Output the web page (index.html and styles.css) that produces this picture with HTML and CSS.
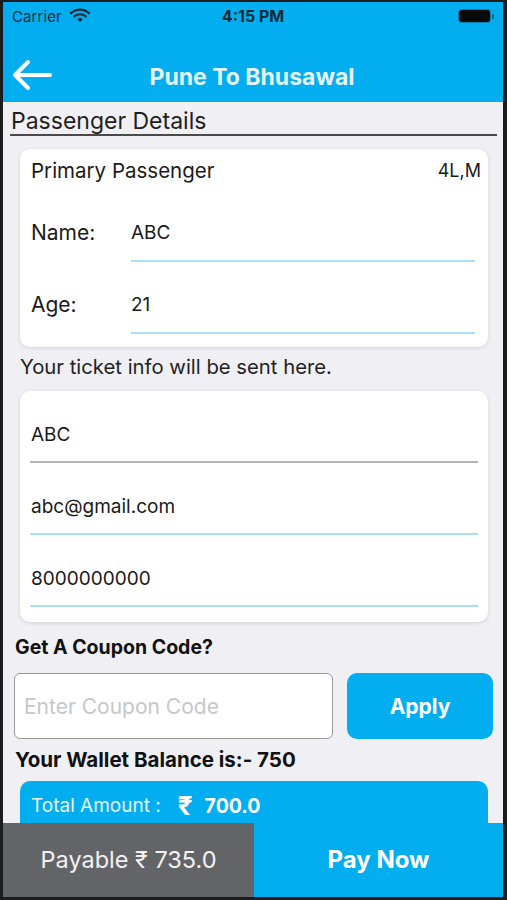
FILE: index.html
```html
<!DOCTYPE html>
<html>
<head>
<meta charset="utf-8">
<link rel="stylesheet" href="styles.css">
</head>
<body>
<div class="app">
  <header class="top">
    <div class="status">
      <div class="status-left">
        <span class="carrier">Carrier</span>
        <svg class="wifi" width="20" height="15" viewBox="0 0 20 15">
          <path d="M1 5.2 A13 13 0 0 1 19 5.2" fill="none" stroke="#0c2a36" stroke-width="2.4" stroke-linecap="round"/>
          <path d="M4.3 8.4 A8.3 8.3 0 0 1 15.7 8.4" fill="none" stroke="#0c2a36" stroke-width="2.4" stroke-linecap="round"/>
          <path d="M10 14 L7.2 11.3 A4 4 0 0 1 12.8 11.3 Z" fill="#0c2a36"/>
        </svg>
      </div>
      <span class="time">4:15 PM</span>
      <div class="battery"><span class="batt-body"></span><span class="batt-tip"></span></div>
    </div>
    <nav class="navbar">
      <svg class="back" width="42" height="32" viewBox="0 0 42 32">
        <path d="M39 16 H5 M17 3 L4 16 L17 29" fill="none" stroke="#fff" stroke-width="4" stroke-linecap="round" stroke-linejoin="round"/>
      </svg>
      <h1 class="title">Pune To Bhusawal</h1>
    </nav>
  </header>

  <main class="content">
    <h2 class="section-title">Passenger Details</h2>

    <section class="card passenger">
      <div class="card-head">
        <span class="head-name">Primary Passenger</span>
        <span class="head-seat">4L,M</span>
      </div>
      <div class="pair">
        <span class="label">Name:</span>
        <span class="field line-blue">ABC</span>
      </div>
      <div class="pair">
        <span class="label">Age:</span>
        <span class="field line-blue">21</span>
      </div>
    </section>

    <p class="info">Your ticket info will be sent here.</p>

    <section class="card contact">
      <div class="cfield line-gray">ABC</div>
      <div class="cfield line-blue">abc@gmail.com</div>
      <div class="cfield line-blue">8000000000</div>
    </section>

    <p class="bold-label coupon-label">Get A Coupon Code?</p>
    <div class="coupon-row">
      <div class="coupon-input">Enter Coupon Code</div>
      <button class="apply">Apply</button>
    </div>

    <p class="bold-label wallet">Your Wallet Balance is:- 750</p>

    <section class="total">
      <span class="total-label">Total Amount :</span>
      <span class="total-rupee">₹</span>
      <span class="total-value">700.0</span>
    </section>
  </main>

  <footer class="footer">
    <div class="payable">Payable ₹ 735.0</div>
    <div class="paynow">Pay Now</div>
  </footer>
</div>
</body>
</html>
```

FILE: styles.css
```css
* { box-sizing: border-box; }
html, body { margin: 0; padding: 0; }
body {
  background: #1b1c1e;
  font-family: Inter, "Noto Sans", sans-serif;
  width: 507px;
  height: 900px;
  overflow: hidden;
}
.app {
  margin: 2px 4px 0 3px;
  width: 500px;
  height: 895px;
  display: flex;
  flex-direction: column;
  background: #efeff4;
  overflow: hidden;
}
.top {
  background: #02aef0;
  height: 100px;
  flex: none;
}
.status {
  height: 28px;
  display: flex;
  align-items: center;
  justify-content: space-between;
  padding: 0 9px 0 9px;
}
.status-left { display: flex; align-items: center; gap: 8px; width: 120px; }
.carrier { font-size: 15px; color: #0c2a36; letter-spacing: 0.1px; }
.wifi { margin-top: -2px; }
.time { font-size: 16px; font-weight: 700; color: #0c2a36; }
.battery { width: 120px; display: flex; justify-content: flex-end; align-items: center; }
.batt-body {
  width: 31px; height: 12px; background: #0a0a0a; border-radius: 3px;
  box-shadow: 0 0 0 1px rgba(10,40,55,0.35);
}
.batt-tip { width: 2px; height: 5px; background: rgba(10,40,55,0.5); margin-left: 2px; border-radius: 0 1px 1px 0; }

.navbar {
  height: 72px;
  display: flex;
  align-items: center;
  position: relative;
  padding: 18px 0 0 8px;
}
.title {
  position: absolute;
  left: 0; right: 0;
  top: 47px;
  margin: 0;
  text-align: center;
  font-size: 23px;
  font-weight: 700;
  color: #e3f4fb;
  line-height: 28px;
  transform: translateY(-50%);
  padding-right: 2px;
}

.content {
  flex: 1;
  overflow: hidden;
  display: flex;
  flex-direction: column;
}
.content > * { flex: none; }
.section-title {
  margin: 6px 6px 0 7px;
  font-size: 23px;
  font-weight: 400;
  color: #1f1f1f;
  line-height: 26px;
  border-bottom: 2px solid #4a4a4a;
  padding-left: 1px;
}
.card {
  background: #fff;
  border-radius: 10px;
  margin: 0 15px 0 17px;
  box-shadow: 0 1px 4px rgba(0,0,0,0.12);
}
.passenger { margin-top: 13px; padding: 10px 7px 13px 11px; }
.card-head { display: flex; justify-content: space-between; align-items: center; height: 22px; }
.head-name { font-size: 20.5px; color: #1a1a1a; }
.head-seat { font-size: 18px; color: #1a1a1a; }
.pair { display: flex; margin-top: 9px; }
.pair + .pair { margin-top: 0; }
.label { width: 100px; font-size: 21px; color: #1a1a1a; padding-top: 31px; line-height: 24px; }
.field {
  flex: 1;
  margin-right: 6px;
  padding: 31px 0 15px;
  line-height: 24px;
  font-size: 19px;
  color: #1a1a1a;
}
.line-blue { border-bottom: 2px solid #aadff6; }
.line-gray { border-bottom: 2px solid #b4b4b4; }

.info {
  margin: 8px 0 0 17px;
  font-size: 20.3px;
  line-height: 24px;
  color: #1f1f1f;
}
.contact { margin-top: 12px; padding: 0 10px 15px 10px; }
.cfield {
  padding: 32px 0 14px 1px;
  line-height: 24px;
  font-size: 19px;
  color: #1a1a1a;
}

.bold-label { font-weight: 700; color: #111; margin: 0; }
.coupon-label { margin: 14px 0 0 12px; font-size: 19.5px; line-height: 22px; }
.coupon-row { display: flex; gap: 14px; margin: 15px 10px 0 11px; height: 66px; }
.coupon-input {
  flex: none;
  width: 319px;
  background: #fff;
  border: 1.5px solid #9a9a9a;
  border-radius: 6px;
  display: flex;
  align-items: center;
  padding-left: 9px;
  font-size: 21px;
  color: #c6c6cb;
}
.apply {
  flex: 1;
  border: none;
  border-radius: 10px;
  background: #02aef0;
  color: #fff;
  font-family: inherit;
  font-size: 21px;
  font-weight: 700;
  padding: 0;
}
.wallet { margin: 9px 0 0 12px; font-size: 20.5px; line-height: 24px; }
.total {
  margin: 9px 15px 0 17px;
  height: 90px;
  background: #02aef0;
  border-radius: 10px 10px 0 0;
  display: flex;
  align-items: flex-start;
  padding: 14px 0 0 11px;
  color: #fff;
  line-height: 22px;
}
.total-label { font-size: 19px; color: #e6f6fd; }
.total-rupee { font-size: 26px; font-weight: 700; margin-left: 17px; line-height: 22px; }
.total-value { font-size: 19.5px; font-weight: 700; margin-left: 12px; }

.footer {
  flex: none;
  height: 74px;
  display: flex;
}
.payable {
  width: 251px;
  background: #636468;
  color: #f2f2f2;
  font-size: 23.5px;
  display: flex;
  align-items: center;
  justify-content: center;
  padding-bottom: 2px;
}
.paynow {
  flex: 1;
  background: #02aef0;
  color: #fff;
  font-size: 24px;
  font-weight: 700;
  display: flex;
  align-items: center;
  justify-content: center;
  padding-bottom: 2px;
}
```
